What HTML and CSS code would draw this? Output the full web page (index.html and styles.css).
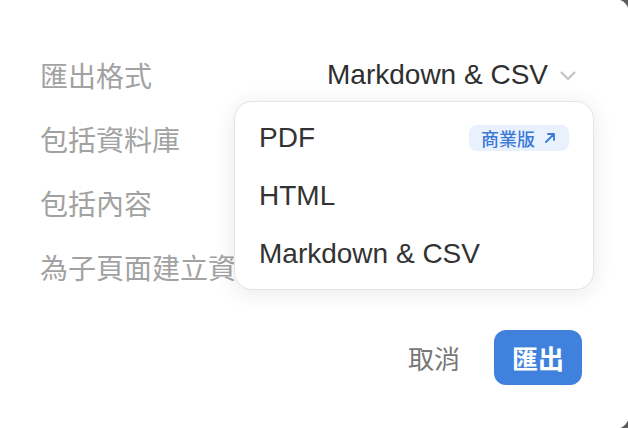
FILE: index.html
```html
<!DOCTYPE html>
<html lang="zh-Hant">

<head>
  <meta charset="UTF-8" />
  <title>匯出</title>
  <link rel="stylesheet" href="styles.css">
</head>

<body>
  <div class="dialog">
    <div class="rows">
      <div class="row">
        <span class="label">匯出格式</span>
        <span class="value">
          Markdown &amp; CSV
          <svg class="chevron" width="16" height="10" viewBox="0 0 16 10">
            <path d="M1.5 1.5 L8 8 L14.5 1.5" fill="none" stroke="#c2c2c2" stroke-width="2" stroke-linecap="round" stroke-linejoin="round" />
          </svg>
        </span>
      </div>
      <div class="row">
        <span class="label">包括資料庫</span>
      </div>
      <div class="row">
        <span class="label">包括內容</span>
      </div>
      <div class="row">
        <span class="label">為子頁面建立資料夾</span>
      </div>
    </div>

    <div class="footer">
      <button class="btn-cancel">取消</button>
      <button class="btn-export">匯出</button>
    </div>

    <!-- format dropdown, open -->
    <div class="menu">
      <div class="menu-item">
        <span>PDF</span>
        <span class="badge">
          商業版
          <svg width="12" height="12" viewBox="0 0 12 12">
            <path d="M2 10 L10 2 M4 2 H10 V8" fill="none" stroke="#3b79d8" stroke-width="1.8" stroke-linecap="round" stroke-linejoin="round" />
          </svg>
        </span>
      </div>
      <div class="menu-item">HTML</div>
      <div class="menu-item">Markdown &amp; CSV</div>
    </div>
  </div>
</body>

</html>
```

FILE: styles.css
```css
body {
  margin: 0;
  background-color: #5c5c5c;
  overflow: hidden;
  font-family: "Liberation Sans", "Noto Sans CJK TC", sans-serif;
}

.dialog {
  position: relative;
  box-sizing: border-box;
  margin: -1px 0 0 -40px;
  width: 669px;
  height: 430px;
  padding: 44px 53px 0 80px;
  background: #fff;
  border-radius: 14px;
}

.rows {
  display: flex;
  flex-direction: column;
}

.row {
  display: flex;
  justify-content: space-between;
  align-items: center;
  height: 64px;
}

.label {
  font-family: "Noto Sans CJK TC", sans-serif;
  font-size: 28px;
  color: #a2a2a2;
  white-space: nowrap;
}

.value {
  display: flex;
  align-items: center;
  gap: 12px;
  font-size: 28px;
  color: #2f2f2f;
}

.chevron {
  margin-top: 2px;
}

.footer {
  display: flex;
  justify-content: flex-end;
  align-items: center;
  gap: 17px;
  margin-top: 31px;
  margin-right: -6px;
}

.footer button {
  font-family: "Noto Sans CJK TC", sans-serif;
  font-size: 26px;
  border: none;
  cursor: pointer;
}

.btn-cancel {
  background: none;
  color: #777;
  padding: 0 17px;
  height: 55px;
}

.btn-export {
  background-color: #3f81dc;
  color: #fff;
  font-weight: 700;
  width: 88px;
  height: 55px;
  border-radius: 12px;
}

.menu {
  position: absolute;
  left: 274px;
  top: 102px;
  box-sizing: border-box;
  width: 360px;
  height: 189px;
  padding: 7px 0;
  background: #fff;
  border: 1px solid #e4e4e4;
  border-radius: 18px;
  box-shadow: 0 3px 22px rgba(0, 0, 0, 0.09);
}

.menu-item {
  display: flex;
  justify-content: space-between;
  align-items: center;
  height: 58px;
  padding: 0 24px;
  font-size: 28px;
  color: #333;
}

.badge {
  display: flex;
  align-items: center;
  gap: 9px;
  box-sizing: border-box;
  width: 100px;
  height: 26px;
  padding: 0 12px;
  background-color: #e9f1fd;
  border-radius: 8px;
  font-family: "Noto Sans CJK TC", sans-serif;
  font-size: 18px;
  font-weight: 500;
  color: #3b79d8;
}
```
